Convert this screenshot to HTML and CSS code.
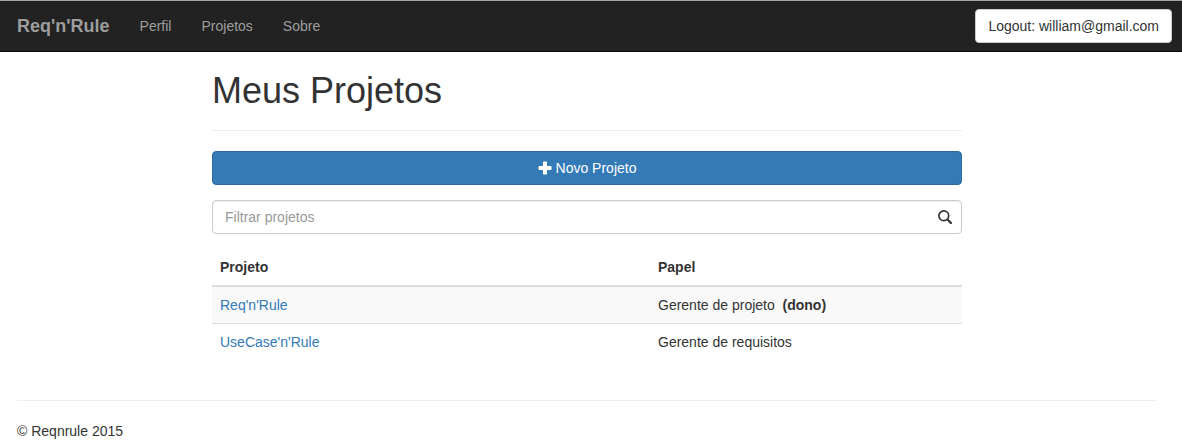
FILE: index.html
```html
<!DOCTYPE html>
<html lang="pt-BR">
<head>
<meta charset="utf-8">
<meta name="viewport" content="width=device-width, initial-scale=1">
<title>Meus Projetos - Req'n'Rule</title>
<link rel="stylesheet" href="styles.css">
</head>
<body>
<header class="navbar">
  <div class="container navbar-inner">
    <a class="brand" href="#">Req'n'Rule</a>
    <nav class="nav">
      <a class="nav-link" href="#">Perfil</a>
      <a class="nav-link" href="#">Projetos</a>
      <a class="nav-link" href="#">Sobre</a>
    </nav>
    <button class="btn btn-default" type="button">Logout: william@gmail.com</button>
  </div>
</header>
<div class="container page">
  <main class="content">
    <h1 class="title">Meus Projetos</h1>
    <button class="btn btn-primary" type="button">
      <svg class="icon" viewBox="0 0 14 14" aria-hidden="true"><path fill="currentColor" d="M5.500 .5h3a.5.5 0 0 1 .5.5v4h4a.5.5 0 0 1 .5.5v3a.5.5 0 0 1-.5.5H9v4a.5.5 0 0 1-.5.5h-3A.5.5 0 0 1 5 13V9H1a.5.5 0 0 1-.5-.5v-3A.5.5 0 0 1 1 5h4V1a.5.5 0 0 1 .5-.5z"/></svg>
      Novo Projeto
    </button>
    <div class="search">
      <input class="search-input" type="text" placeholder="Filtrar projetos" aria-label="Filtrar projetos">
      <svg class="icon search-icon" viewBox="0 0 14 14" aria-hidden="true"><circle cx="5.800" cy="5.800" r="4.900" fill="none" stroke="currentColor" stroke-width="1.700"/><path d="M9.500 9.500l3.500 3.500" fill="none" stroke="currentColor" stroke-width="2.200" stroke-linecap="round"/></svg>
    </div>
    <table class="table">
      <thead>
        <tr><th class="col-project" scope="col">Projeto</th><th scope="col">Papel</th></tr>
      </thead>
      <tbody>
        <tr><td><a class="link" href="#">Req'n'Rule</a></td><td>Gerente de projeto &nbsp;<strong>(dono)</strong></td></tr>
        <tr><td><a class="link" href="#">UseCase'n'Rule</a></td><td>Gerente de requisitos</td></tr>
      </tbody>
    </table>
  </main>
  <footer class="footer">© Reqnrule 2015</footer>
</div>
</body>
</html>
```
FILE: styles.css
```css
* {
  box-sizing: border-box;
}

body {
  margin: 0;
  background: #fff;
  color: #333;
  font: 14px/20px "Liberation Sans", Arial, sans-serif;
}

.container {
  width: 100%;
  max-width: 1170px;
  margin: 0 auto;
}

.navbar {
  padding: 0 10px 0 2px;
  background: #222;
  border-top: 1px solid #a0a4a2;
  border-bottom: 1px solid #080808;
}

.navbar-inner {
  display: flex;
  align-items: center;
  min-height: 50px;
}

.brand {
  padding: 15px;
  color: #9d9d9d;
  font-size: 18px;
  font-weight: bold;
  text-decoration: none;
}

.nav {
  display: flex;
  flex: 1;
}

.nav-link {
  padding: 15px;
  color: #9d9d9d;
  text-decoration: none;
}

.btn {
  padding: 6px 12px;
  border: 1px solid transparent;
  border-radius: 4px;
  font: inherit;
  cursor: pointer;
}

.btn-default {
  background: #fff;
  border-color: #ccc;
  color: #333;
}

.btn-primary {
  display: flex;
  align-items: center;
  justify-content: center;
  gap: 4px;
  width: 100%;
  background: #337ab7;
  border-color: #2e6da4;
  color: #fff;
}

.icon {
  flex: none;
  width: 14px;
  height: 14px;
}

.page {
  padding: 0 25px 0 17px;
  max-width: 1182px;
}

.content {
  max-width: 750px;
  margin: 0 auto;
  padding-top: 19px;
}

.title {
  margin: 0 0 20px;
  padding-bottom: 19px;
  border-bottom: 1px solid #eee;
  font-size: 36px;
  font-weight: 500;
  line-height: 40px;
}

.search {
  position: relative;
  margin: 15px 0;
}

.search-input {
  display: block;
  width: 100%;
  height: 34px;
  padding: 6px 42px 6px 12px;
  border: 1px solid #ccc;
  border-radius: 4px;
  box-shadow: inset 0 1px 1px rgba(0, 0, 0, 0.075);
  color: #555;
  font: inherit;
}

.search-input::placeholder {
  color: #999;
  opacity: 1;
}

.search-icon {
  position: absolute;
  top: 10px;
  right: 10px;
}

.table {
  width: 100%;
  margin-bottom: 20px;
  border-collapse: collapse;
}

.table th,
.table td {
  padding: 8px;
  text-align: left;
}

.table th {
  border-bottom: 2px solid #ddd;
}

.col-project {
  width: 438px;
}

.table tbody tr:nth-child(odd) {
  background: #f9f9f9;
}

.table tbody tr + tr td {
  border-top: 1px solid #ddd;
}

.link {
  color: #337ab7;
  text-decoration: none;
}

.footer {
  margin-top: 40px;
  padding: 20px 0 5px;
  border-top: 1px solid #eee;
}
```
